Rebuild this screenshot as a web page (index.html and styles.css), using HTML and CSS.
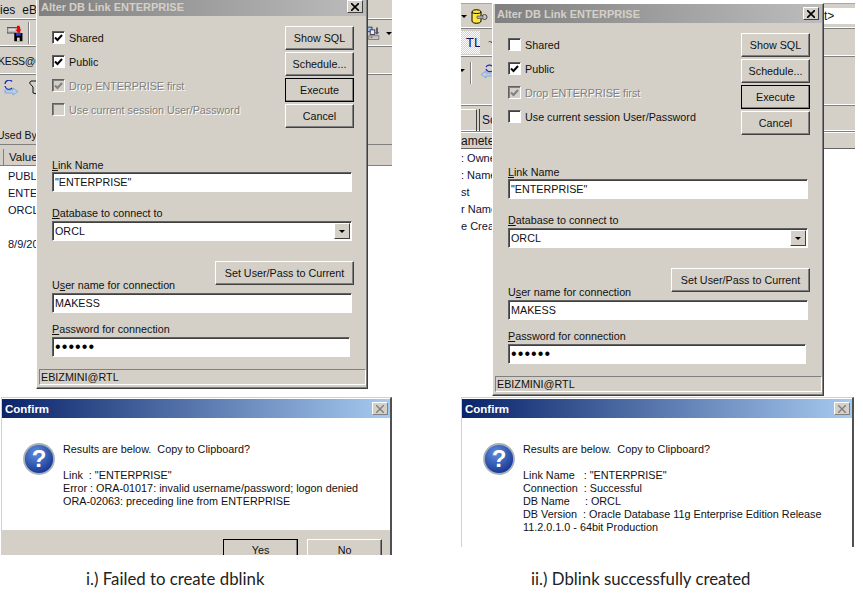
FILE: index.html
```html
<!DOCTYPE html>
<html lang="en">
<head>
  <meta charset="UTF-8">
  <title>Alter DB Link</title>
  <link rel="stylesheet" href="styles.css">
</head>
<body>
<div class="page">

  <!-- left: failed -->
  <div class="shot shot-left">
    <div class="app app-left">
      <div class="bar bar-menu"><span class="menu-text">ies</span><span class="menu-text menu-eb">eB</span></div>
      <div class="bar bar-tools">
        <svg class="ico-save" width="18" height="17" viewBox="0 0 18 17">
          <rect x="0" y="2" width="14" height="6" fill="#b8b8b8" stroke="#444"/>
          <rect x="2" y="4" width="9" height="1" fill="#fff"/>
          <rect x="8" y="8" width="9" height="9" fill="#000"/>
          <rect x="10" y="8" width="5" height="3" fill="#2a3fd0"/>
          <rect x="11" y="13" width="3" height="4" fill="#d4d0c8"/>
          <path d="M11 0h3v4h2l-3.500 4-3.500-4h2z" fill="#f00000"/>
        </svg>
        <span class="tool-sep"></span>
        <svg class="ico-copy" width="14" height="15" viewBox="0 0 14 15">
          <rect x="0.500" y="0.500" width="5" height="5" fill="#9cc4e8" stroke="#335"/>
          <rect x="3.500" y="3.500" width="5" height="5" fill="#e8f0f8" stroke="#335"/>
          <path d="M10 1h2v5h1.500l-2.500 3-2.500-3H10z" fill="#556"/>
          <rect x="2" y="10" width="11" height="4" fill="#c8c8c8" stroke="#777"/>
          <rect x="4" y="11" width="2" height="1" fill="#e00000"/>
        </svg>
        <span class="drop-arrow drop-far"></span>
      </div>
      <div class="bar bar-conn"><span class="conn-text">KESS@C</span></div>
      <div class="bar-body">
        <div class="tool-icons">
          <svg width="16" height="17" viewBox="0 0 16 17" fill="none">
            <path d="M9 1.500A4 4 0 0 0 2 4M2 6a4 4 0 0 0 7 2" stroke="#1a2ac0" stroke-width="1.300"/>
            <path d="M2 10h8V8l5 3.500L10 15v-2H2z" fill="#b4d0f0" stroke="#7898c8" stroke-width="0.700"/>
          </svg>
          <svg class="ico-funnel" width="8" height="15" viewBox="0 0 8 15" fill="none">
            <path d="M8 1H2L0.500 3 4 7v6l4 1" stroke="#111"/>
          </svg>
        </div>
        <div class="used-by">Used By</div>
      </div>
      <div class="head-row"><span class="head-cell">Value</span></div>
      <div class="rows">
        <div class="row">PUBLI</div>
        <div class="row">ENTER</div>
        <div class="row">ORCL</div>
        <div class="row"></div>
        <div class="row">8/9/20</div>
      </div>
    </div>

    <div class="dialog dialog-left">
      <div class="titlebar">
        <span>Alter DB Link ENTERPRISE</span>
        <span class="close">
          <svg width="8" height="8" viewBox="0 0 8 8"><path d="M0 0l8 8M8 0L0 8" stroke="#000" stroke-width="1.600"/></svg>
        </span>
      </div>
      <div class="dlg-top">
        <div class="checks">
          <label class="check"><span class="box"><svg width="9" height="8" viewBox="0 0 9 8"><path d="M1 3.500l2.500 2.500L8 1" fill="none" stroke="#000" stroke-width="2"/></svg></span>Shared</label>
          <label class="check"><span class="box"><svg width="9" height="8" viewBox="0 0 9 8"><path d="M1 3.500l2.500 2.500L8 1" fill="none" stroke="#000" stroke-width="2"/></svg></span>Public</label>
          <label class="check off"><span class="box"><svg width="9" height="8" viewBox="0 0 9 8"><path d="M1 3.500l2.500 2.500L8 1" fill="none" stroke="#808080" stroke-width="2"/></svg></span>Drop ENTERPRISE first</label>
          <label class="check off"><span class="box"></span>Use current session User/Password</label>
        </div>
        <div class="actions">
          <button class="btn">Show SQL</button>
          <button class="btn">Schedule...</button>
          <button class="btn btn-default">Execute</button>
          <button class="btn">Cancel</button>
        </div>
      </div>
      <div class="field-label field-first"><u>L</u>ink Name</div>
      <div class="input input-link">"ENTERPRISE"</div>
      <div class="field-label field-db"><u>D</u>atabase to connect to</div>
      <div class="input combo">ORCL<span class="combo-btn"><span class="drop-arrow"></span></span></div>
      <div class="set-row"><button class="btn btn-set">Set User/Pass to Current</button></div>
      <div class="field-label field-user">U<u>s</u>er name for connection</div>
      <div class="input">MAKESS</div>
      <div class="field-label field-pass"><u>P</u>assword for connection</div>
      <div class="input dots">••••••</div>
      <div class="status">EBIZMINI@RTL</div>
    </div>

    <div class="confirm confirm-left">
      <div class="confirm-title">
        <span>Confirm</span>
        <span class="close close-off">
          <svg width="8" height="8" viewBox="0 0 8 8"><path d="M0 0l8 8M8 0L0 8" stroke="#808080" stroke-width="1.400"/></svg>
        </span>
      </div>
      <div class="confirm-body">
        <svg class="ask" width="32" height="32" viewBox="0 0 32 32">
          <defs><radialGradient id="askA" cx="40%" cy="30%" r="75%"><stop offset="0" stop-color="#5f8fe0"/><stop offset="1" stop-color="#12308c"/></radialGradient></defs>
          <circle cx="16" cy="16" r="15" fill="url(#askA)" stroke="#a8b0bc" stroke-width="1.800"/>
          <text x="16" y="24" text-anchor="middle" class="ask-mark">?</text>
        </svg>
        <div class="msg">Results are below.  Copy to Clipboard?

Link  : "ENTERPRISE"
Error : ORA-01017: invalid username/password; logon denied
ORA-02063: preceding line from ENTERPRISE</div>
      </div>
      <div class="confirm-foot">
        <button class="btn btn-foot btn-yes">Yes</button>
        <button class="btn btn-foot">No</button>
      </div>
    </div>
    <p class="caption caption-left">i.) Failed to create dblink</p>
  </div>

  <!-- right: success -->
  <div class="shot shot-right">
    <div class="app app-right">
      <div class="bar bar-r1">
        <span class="drop-arrow"></span>
        <svg class="ico-db" width="17" height="15" viewBox="0 0 17 15">
          <path d="M1 3c0-3 9-3 9 0v9c0 3-9 3-9 0z" fill="#ffe83c" stroke="#000"/>
          <path d="M1 3c0 2 9 2 9 0" fill="none" stroke="#000"/>
          <circle cx="13.500" cy="8" r="2.500" fill="#c8c8c8" stroke="#444"/>
          <rect x="6" y="7" width="6" height="2.500" fill="#b0b0b0" stroke="#444" stroke-width="0.600"/>
        </svg>
        <span class="addr">t&gt;</span>
      </div>
      <div class="bar bar-r2">
        <span class="dither">TL</span>
        <span class="squiggle">~</span>
      </div>
      <div class="bar bar-r3">
        <span class="drop-arrow"></span>
        <span class="tool-sep"></span>
        <svg width="12" height="17" viewBox="0 0 12 17" fill="none">
          <path d="M11 3A4 4 0 0 0 5 4M5 6a4 4 0 0 0 6 2" stroke="#1a2ac0" stroke-width="1.200"/>
          <path d="M12 10H5V8l-5 3.500L5 15v-2h7z" fill="#b4d0f0" stroke="#7898c8" stroke-width="0.700"/>
        </svg>
      </div>
      <div class="bar bar-tabs">
        <span class="tab tab-on"></span>
        <span class="tab tab-sc">Sc</span>
      </div>
      <div class="head-row head-right"><span>ameter</span></div>
      <div class="rows rows-right">
        <div class="row">: Owne</div>
        <div class="row">: Name</div>
        <div class="row">st</div>
        <div class="row">r Name</div>
        <div class="row">e Crea</div>
      </div>
    </div>

    <div class="dialog dialog-right">
      <div class="titlebar">
        <span>Alter DB Link ENTERPRISE</span>
        <span class="close">
          <svg width="8" height="8" viewBox="0 0 8 8"><path d="M0 0l8 8M8 0L0 8" stroke="#000" stroke-width="1.600"/></svg>
        </span>
      </div>
      <div class="dlg-top">
        <div class="checks">
          <label class="check"><span class="box"></span>Shared</label>
          <label class="check"><span class="box"><svg width="9" height="8" viewBox="0 0 9 8"><path d="M1 3.500l2.500 2.500L8 1" fill="none" stroke="#000" stroke-width="2"/></svg></span>Public</label>
          <label class="check off"><span class="box"><svg width="9" height="8" viewBox="0 0 9 8"><path d="M1 3.500l2.500 2.500L8 1" fill="none" stroke="#808080" stroke-width="2"/></svg></span>Drop ENTERPRISE first</label>
          <label class="check"><span class="box"></span>Use current session User/Password</label>
        </div>
        <div class="actions">
          <button class="btn">Show SQL</button>
          <button class="btn">Schedule...</button>
          <button class="btn btn-default">Execute</button>
          <button class="btn">Cancel</button>
        </div>
      </div>
      <div class="field-label field-first"><u>L</u>ink Name</div>
      <div class="input input-link">"ENTERPRISE"</div>
      <div class="field-label field-db"><u>D</u>atabase to connect to</div>
      <div class="input combo">ORCL<span class="combo-btn"><span class="drop-arrow"></span></span></div>
      <div class="set-row"><button class="btn btn-set">Set User/Pass to Current</button></div>
      <div class="field-label field-user">U<u>s</u>er name for connection</div>
      <div class="input">MAKESS</div>
      <div class="field-label field-pass"><u>P</u>assword for connection</div>
      <div class="input dots">••••••</div>
      <div class="status">EBIZMINI@RTL</div>
    </div>

    <div class="confirm confirm-right">
      <div class="confirm-title">
        <span>Confirm</span>
        <span class="close close-off">
          <svg width="8" height="8" viewBox="0 0 8 8"><path d="M0 0l8 8M8 0L0 8" stroke="#808080" stroke-width="1.400"/></svg>
        </span>
      </div>
      <div class="confirm-body">
        <svg class="ask" width="32" height="32" viewBox="0 0 32 32">
          <defs><radialGradient id="askB" cx="40%" cy="30%" r="75%"><stop offset="0" stop-color="#5f8fe0"/><stop offset="1" stop-color="#12308c"/></radialGradient></defs>
          <circle cx="16" cy="16" r="15" fill="url(#askB)" stroke="#a8b0bc" stroke-width="1.800"/>
          <text x="16" y="24" text-anchor="middle" class="ask-mark">?</text>
        </svg>
        <div class="msg">Results are below.  Copy to Clipboard?

Link Name   : "ENTERPRISE"
Connection  : Successful
DB Name     : ORCL
DB Version  : Oracle Database 11g Enterprise Edition Release
11.2.0.1.0 - 64bit Production</div>
      </div>
    </div>
    <p class="caption caption-right">ii.) Dblink successfully created</p>
  </div>

</div>
</body>
</html>
```

FILE: styles.css
```css
html, body {
  margin: 0;
  padding: 0;
  background: #fff;
}
.page {
  display: flex;
  width: 863px;
  height: 607px;
  overflow: hidden;
  font-family: "Liberation Sans", Arial, sans-serif;
  font-size: 10.750px;
  color: #111;
}
.shot {
  position: relative;
}
.shot-left {
  width: 392px;
  margin-right: 69px;
}
.shot-right {
  width: 394px;
}

/* app behind the dialog */
.app {
  overflow: hidden;
  background: #fff;
}
.app-left {
  height: 397px;
}
.app-right {
  height: 394px;
  margin-top: 3px;
  border-top: 1px solid #a8a8a0;
  box-sizing: border-box;
}
.bar {
  display: flex;
  align-items: center;
  box-sizing: border-box;
  background: #d4d0c8;
  border-bottom: 1px solid #808080;
  box-shadow: inset 0 -2px 0 -1px #fff;
}
.bar-menu {
  height: 20px;
}
.menu-text {
  font-size: 12px;
}
.menu-eb {
  margin-left: 7px;
}
.bar-tools {
  height: 27px;
}
.ico-save {
  margin-left: 7px;
}
.tool-sep {
  width: 1px;
  height: 22px;
  margin-left: 5px;
  background: #808080;
  border-right: 1px solid #fff;
}
.ico-copy {
  margin-left: 337px;
}
.drop-arrow {
  display: inline-block;
  width: 0;
  height: 0;
  border-left: 3px solid transparent;
  border-right: 3px solid transparent;
  border-top: 3px solid #000;
}
.drop-far {
  margin-left: 6px;
}
.bar-conn {
  height: 28px;
}
.conn-text {
  font-size: 10.500px;
  letter-spacing: -0.300px;
  margin-left: -2px;
}
.bar-body {
  height: 70px;
  background: #d4d0c8;
  border-bottom: 1px solid #808080;
  box-sizing: border-box;
}
.tool-icons {
  display: flex;
  align-items: flex-start;
  padding: 5px 0 0 3px;
}
.ico-funnel {
  margin-left: 10px;
}
.used-by {
  margin: 32px 0 0 -3px;
  font-size: 10.500px;
  white-space: nowrap;
}
.head-row {
  height: 21px;
  box-sizing: border-box;
  padding: 4px 0 0 3px;
  background: #d4d0c8;
  border-bottom: 1px solid #808080;
}
.head-cell {
  display: block;
  height: 16px;
  padding: 1px 0 0 5px;
  line-height: 15px;
  font-size: 11.500px;
  box-sizing: border-box;
  border-left: 1px solid #808080;
}
.rows {
  padding: 2px 0 0 8px;
}
.row {
  height: 17px;
  line-height: 17px;
  font-size: 11px;
  white-space: nowrap;
  color: #101038;
}
.bar-r1 {
  height: 25px;
}
.ico-db {
  margin-left: 4px;
}
.addr {
  align-self: flex-start;
  margin: 4px 0 0 auto;
  width: 32px;
  height: 16px;
  padding-left: 1px;
  box-sizing: border-box;
  line-height: 16px;
  background: #fff;
  font-size: 12px;
}
.bar-r2 {
  height: 28px;
}
.dither {
  width: 19px;
  height: 23px;
  line-height: 23px;
  text-indent: 5px;
  overflow: hidden;
  background: repeating-conic-gradient(#d4d0c8 0 25%, #fff 0 50%) 0 0 / 2px 2px;
  font-size: 13px;
  color: #101060;
}
.squiggle {
  margin-left: 8px;
  color: #902020;
  font-size: 10px;
}
.bar-r3 {
  height: 49px;
  align-items: flex-start;
  padding-top: 5px;
}
.bar-r3 .drop-arrow {
  margin-top: 7px;
  margin-left: -2px;
}
.bar-r3 .tool-sep {
  margin-left: 5px;
  margin-right: 9px;
}
.bar-r3 svg {
  margin-top: 1px;
}
.bar-tabs {
  height: 26px;
  align-items: flex-end;
}
.tab {
  display: block;
  height: 22px;
  box-sizing: border-box;
}
.tab-on {
  width: 16px;
  border-right: 1px solid #404040;
  border-top: 1px solid #fff;
}
.tab-sc {
  width: 20px;
  margin-left: 2px;
  padding-left: 2px;
  line-height: 22px;
  border-left: 1px solid #404040;
  font-size: 12px;
  color: #101038;
}
.head-right {
  height: 17px;
  padding: 1px 0 0 0;
  font-size: 12px;
  border-top: 1px solid #fff;
  border-bottom: 1px solid #666;
}
.rows-right {
  padding: 1px 0 0 0;
}

/* alter dialog */
.dialog {
  position: absolute;
  width: 332px;
  height: 393px;
  box-sizing: border-box;
  padding: 0 1px 2px 2px;
  background: #d4d0c8;
  border-style: solid;
  border-width: 1px;
  border-color: #fff #404040 #404040 #fff;
  box-shadow: inset -1px -1px 0 #808080;
}
.dialog-left {
  left: 36px;
  top: -4px;
}
.dialog-right {
  left: 31px;
  top: 3px;
}
.titlebar {
  display: flex;
  align-items: center;
  justify-content: space-between;
  height: 19px;
  padding: 0 3px 0 2px;
  background: linear-gradient(90deg, #808080, #bcbcbc);
  color: #d4d0c8;
  font-weight: bold;
  font-size: 11px;
}
.close {
  display: flex;
  align-items: center;
  justify-content: center;
  width: 16px;
  height: 13px;
  box-sizing: border-box;
  background: #d4d0c8;
  border: 1px solid;
  border-color: #fff #404040 #404040 #fff;
}
.dlg-top {
  display: flex;
  justify-content: space-between;
  height: 112px;
  padding: 10px 12px 0 13px;
}
.checks {
  display: flex;
  flex-direction: column;
  gap: 11px;
  padding-top: 5px;
}
.check {
  display: flex;
  align-items: center;
  gap: 4px;
  height: 13px;
  white-space: nowrap;
}
.box {
  display: flex;
  align-items: center;
  justify-content: center;
  width: 13px;
  height: 13px;
  box-sizing: border-box;
  background: #fff;
  border: 1px solid;
  border-color: #606060 #fff #fff #606060;
  box-shadow: inset 1px 1px 0 #404040;
}
.off {
  color: #808080;
  text-shadow: 1px 1px 0 #fff;
}
.off .box {
  background: #d4d0c8;
  box-shadow: inset 1px 1px 0 #808080;
}
.actions {
  display: flex;
  flex-direction: column;
  gap: 2px;
}
.btn {
  display: block;
  width: 69px;
  height: 24px;
  padding: 0;
  box-sizing: border-box;
  background: #d4d0c8;
  border: 1px solid;
  border-color: #fff #404040 #404040 #fff;
  box-shadow: inset -1px -1px 0 #808080;
  font-family: "Liberation Sans", Arial, sans-serif;
  font-size: 10.750px;
  color: #111;
}
.btn-default {
  border-color: #000;
}
.btn-set {
  width: 139px;
}
.field-label {
  height: 13px;
  line-height: 13px;
  margin-left: 13px;
}
.field-first {
  margin-top: 21px;
}
.field-db {
  margin-top: 15px;
}
.field-user {
  margin-top: -6px;
}
.field-pass {
  margin-top: 10px;
}
.input {
  position: relative;
  height: 20px;
  width: 300px;
  margin: 1px 0 0 13px;
  padding-left: 2px;
  line-height: 18px;
  box-sizing: border-box;
  background: #fff;
  border: 1px solid;
  border-color: #606060 #fff #fff #606060;
  box-shadow: inset 1px 1px 0 #404040;
}
.input-link {
  margin-top: 0;
}
.combo-btn {
  position: absolute;
  top: 1px;
  right: 1px;
  display: flex;
  align-items: center;
  justify-content: center;
  width: 16px;
  height: 16px;
  box-sizing: border-box;
  background: #d4d0c8;
  border: 1px solid;
  border-color: #fff #404040 #404040 #fff;
}
.dots {
  width: 298px;
  font-size: 16px;
  letter-spacing: 1.100px;
  color: #000;
}
.set-row {
  display: flex;
  justify-content: flex-end;
  margin: 20px 12px 0 0;
}
.status {
  height: 16px;
  margin-top: 12px;
  padding-left: 1px;
  line-height: 14px;
  box-sizing: border-box;
  border: 1px solid;
  border-color: #808080 #fff #fff #808080;
}

/* confirm boxes */
.confirm {
  position: absolute;
  top: 397px;
  box-sizing: border-box;
  padding-top: 1px;
  background: #fff;
  overflow: hidden;
  border-top: 1px solid #d4d0c8;
  border-left: 1px solid #d4d0c8;
  border-right: 2px solid #505050;
}
.confirm-left {
  left: 1px;
  width: 391px;
  height: 158px;
}
.confirm-right {
  left: 0;
  width: 393px;
  height: 150px;
}
.confirm-title {
  display: flex;
  align-items: center;
  justify-content: space-between;
  height: 19px;
  padding: 0 2px 0 3px;
  background: linear-gradient(90deg, #0a246a, #a6caf0);
  color: #fff;
  font-weight: bold;
  font-size: 11.500px;
}
.close-off {
  background: #d4d0c8;
  border-color: #fff #808080 #808080 #fff;
}
.confirm-body {
  display: flex;
  height: 112px;
  padding: 24px 0 0 21px;
  box-sizing: border-box;
}
.ask {
  flex: none;
  margin-top: 1px;
}
.ask-mark {
  font-family: "Liberation Sans", Arial, sans-serif;
  font-weight: bold;
  font-size: 24px;
  fill: #fff;
}
.msg {
  margin: 1px 0 0 8px;
  font-size: 10.820px;
  line-height: 13px;
  white-space: pre;
  color: #111;
}
.confirm-foot {
  display: flex;
  justify-content: flex-end;
  gap: 9px;
  height: 25px;
  padding: 9px 8px 0 0;
  box-sizing: border-box;
  background: #d4d0c8;
}
.btn-foot {
  width: 75px;
  height: 16px;
  padding-top: 5px;
  line-height: 11px;
  border-bottom: 0;
  box-shadow: inset -1px 0 0 #808080;
}
.btn-yes {
  border-color: #000;
}
.caption {
  position: absolute;
  top: 568px;
  margin: 0;
  font-family: Lato, "Open Sans", sans-serif;
  font-size: 16.800px;
  line-height: 22px;
  white-space: nowrap;
  color: #222;
}
.caption-left {
  left: 86px;
}
.caption-right {
  left: 70px;
}
```
